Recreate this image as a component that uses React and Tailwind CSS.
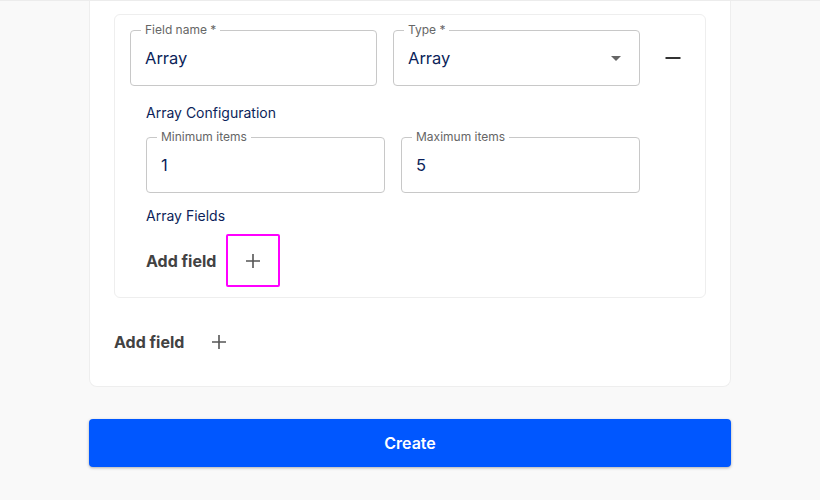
import React from "react";

function Outlined({ label, value, width, select }) {
  return (
    <div className={`relative h-[56px] ${width} shrink-0 rounded border border-[#c8c8c8] flex items-center px-[14px]`}>
      <span className="absolute -top-[9px] left-[10px] bg-white px-[4px] text-[12px] leading-4 text-[#666666]">{label}</span>
      <span className="text-[16.5px] text-[#0c1f5a] flex-1">{value}</span>
      {select && (
        <svg width="10" height="5" viewBox="0 0 10 5" className="mr-[4px]">
          <path d="M0 0 L10 0 L5 5 Z" fill="#666666" />
        </svg>
      )}
    </div>
  );
}

function PlusIcon() {
  return (
    <svg width="16" height="16" viewBox="0 0 16 16">
      <path d="M8 1 V15 M1 8 H15" stroke="#555555" strokeWidth="1.6" fill="none" />
    </svg>
  );
}

function AddField({ focused }) {
  return (
    <div className="flex items-center">
      <span className="text-[16px] font-bold text-[#424242]">Add field</span>
      <div
        className={`w-[54px] h-[53px] flex items-center justify-center rounded-[2px] ${
          focused ? "ml-[10px] border-2 border-[#ff00ff]" : "ml-[8px]"
        }`}
      >
        <PlusIcon />
      </div>
    </div>
  );
}

export default function App() {
  return (
    <div className="w-[820px] h-[500px] bg-[#f9f9f9] border-t border-[#ececec] font-['Inter','Liberation_Sans',sans-serif] overflow-hidden">
      <div className="ml-[89px] w-[642px] bg-white border-x border-b border-[#eeeeee] rounded-b-lg px-6 pt-[13px] pb-[18px]">
        <div className="border border-[#eeeeee] rounded-md px-[15px] pt-[15px] pb-[10px]">
          <div className="flex items-center gap-4">
            <Outlined label="Field name *" value="Array" width="w-[247px]" />
            <Outlined label="Type *" value="Array" width="w-[247px]" select />
            <div className="flex-1 flex justify-center">
              <svg width="16" height="4" viewBox="0 0 16 4">
                <path d="M0.5 2 H15.5" stroke="#333333" strokeWidth="2" />
              </svg>
            </div>
          </div>
          <div className="pl-4 mt-[17px]">
            <div className="text-[14px] leading-5 text-[#0c1f5a]">Array Configuration</div>
            <div className="flex gap-4 mt-[14px]">
              <Outlined label="Minimum items" value="1" width="w-[239px]" />
              <Outlined label="Maximum items" value="5" width="w-[239px]" />
            </div>
            <div className="mt-[13px] text-[14px] leading-5 text-[#0c1f5a]">Array Fields</div>
            <div className="mt-2">
              <AddField focused />
            </div>
          </div>
        </div>
        <div className="mt-[17px]">
          <AddField />
        </div>
      </div>
      <button className="ml-[89px] mt-[32px] w-[642px] h-12 bg-[#0057ff] rounded text-white font-semibold text-[16px] shadow-[0_1px_3px_rgba(0,0,0,0.3)]">
        Create
      </button>
    </div>
  );
}
